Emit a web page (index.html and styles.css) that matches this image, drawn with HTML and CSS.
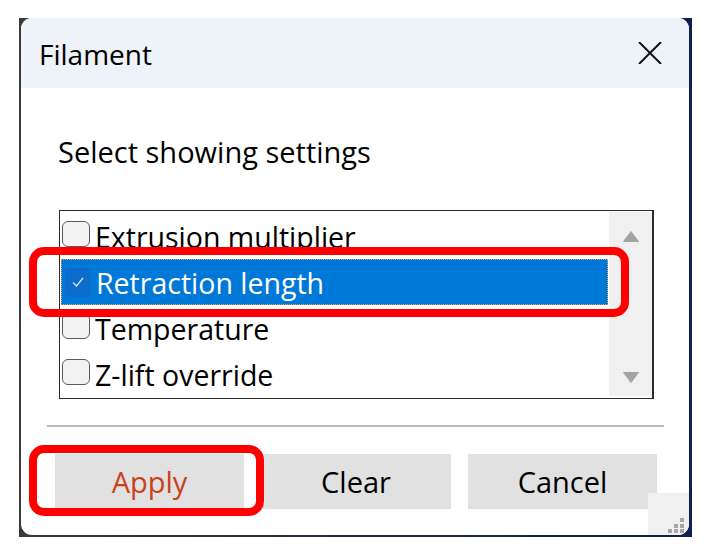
FILE: index.html
```html
<!DOCTYPE html>
<html>
<head>
<meta charset="utf-8">
<link rel="stylesheet" href="styles.css">
</head>
<body>
<div class="page">
  <div class="frame">
    <div class="dialog">
      <div class="titlebar">
        <span class="title">Filament</span>
        <svg class="close" width="24" height="22" viewBox="0 0 24 22"><path d="M1 0 L23 22 M23 0 L1 22" stroke="#111" stroke-width="2" fill="none"/></svg>
      </div>
      <div class="body">
        <div class="prompt">Select showing settings</div>
        <div class="listbox">
          <div class="items">
            <div class="row"><span class="cb"></span><span class="label">Extrusion multiplier</span></div>
            <div class="row selected"><span class="cb checked"><svg width="14" height="12" viewBox="0 0 14 12"><path d="M2 6.5 L5.5 10 L12 2" stroke="#dfe9f7" stroke-width="1.2" fill="none"/></svg></span><span class="label">Retraction length</span></div>
            <div class="row"><span class="cb"></span><span class="label">Temperature</span></div>
            <div class="row"><span class="cb"></span><span class="label">Z-lift override</span></div>
          </div>
          <div class="scrollbar">
            <svg width="16" height="11" viewBox="0 0 16 11"><path d="M8 0.5 L15.5 10.5 L0.5 10.5 Z" fill="#a3a3a3" stroke="#a3a3a3" stroke-linejoin="round"/></svg>
            <svg width="16" height="11" viewBox="0 0 16 11"><path d="M0.5 0.5 L15.5 0.5 L8 10.5 Z" fill="#a3a3a3" stroke="#a3a3a3" stroke-linejoin="round"/></svg>
          </div>
        </div>
        <div class="sep"></div>
        <div class="buttons">
          <div class="btn apply">Apply</div>
          <div class="btn">Clear</div>
          <div class="btn">Cancel</div>
        </div>
      </div>
      <div class="grip">
        <span class="dot d1"></span>
        <span class="dot d2"></span><span class="dot d3"></span>
        <span class="dot d4"></span><span class="dot d5"></span><span class="dot d6"></span>
      </div>
    </div>
  </div>
  <div class="mark mark-row"></div>
  <div class="mark mark-apply"></div>
</div>
</body>
</html>
```
FILE: styles.css
```css
html, body {
  margin: 0;
  padding: 0;
  background: #ffffff;
}
.page {
  position: relative;
  width: 712px;
  height: 558px;
  padding-top: 18px;
  box-sizing: border-box;
  font-family: "Open Sans", "Noto Sans", sans-serif;
  color: #000;
}
.frame {
  margin-left: 19px;
  width: 673px;
  height: 519px;
  box-sizing: border-box;
  padding: 0 3px 2px 2px;
  background: linear-gradient(to right, #3a3a3a 0%, #2a2d3a 40%, #0f1f52 100%);
}
.dialog {
  position: relative;
  width: 668px;
  height: 517px;
  background: #ffffff;
  border-radius: 11px;
  overflow: hidden;
  display: flex;
  flex-direction: column;
}
.titlebar {
  height: 70px;
  flex: none;
  box-sizing: border-box;
  background: #eef2f9;
  display: flex;
  justify-content: space-between;
  align-items: flex-start;
  padding: 16px 27px 0 18px;
}
.title {
  font-size: 28px;
  line-height: 40px;
}
.close {
  margin-top: 8px;
}
.body {
  display: flex;
  flex-direction: column;
}
.prompt {
  margin: 44px 0 0 37px;
  font-size: 29px;
  line-height: 40px;
}
.listbox {
  margin: 38px 0 0 38px;
  width: 595px;
  height: 189px;
  box-sizing: border-box;
  border: 1px solid #2b2b2b;
  border-right-width: 2px;
  display: flex;
}
.items {
  flex: 1;
  padding: 2px 1px 0 1px;
}
.row {
  height: 46px;
  display: flex;
  align-items: center;
  font-size: 28.5px;
  line-height: 43px;
  padding-top: 3px;
  box-sizing: border-box;
}
.row.selected {
  background: #0078d7;
  color: #ffffff;
  outline: 1px dotted #f0a040;
  outline-offset: -1px;
}
.cb {
  width: 28px;
  height: 26px;
  margin: -7px 5px 0 1px;
  box-sizing: border-box;
  border: 1.5px solid #5c5c5c;
  border-radius: 6px;
  background: #f3f3f3;
  flex: none;
  display: flex;
  align-items: center;
  justify-content: center;
}
.cb.checked {
  margin: -3px 5px 0 4px;
  width: 26px;
  height: 29px;
  border: none;
  background: #0b6ccb;
  border-radius: 4px;
}
.label {
  white-space: nowrap;
}
.scrollbar {
  width: 43px;
  margin: 1px 0 2px 0;
  background: #f0f0f0;
  display: flex;
  flex-direction: column;
  align-items: center;
  justify-content: space-between;
  padding: 19px 0 13px 0;
  box-sizing: border-box;
}
.sep {
  margin: 26px 0 0 26px;
  width: 617px;
  height: 2px;
  background: #b8b8b8;
}
.buttons {
  margin: 27px 0 0 34px;
  display: flex;
  gap: 17.5px;
}
.btn {
  width: 189px;
  height: 55px;
  background: #e1e1e1;
  font-size: 29px;
  line-height: 55px;
  text-align: center;
}
.btn.apply {
  color: #c9421c;
}
.grip {
  position: absolute;
  right: -1px;
  bottom: 0;
  width: 42px;
  height: 42px;
  background: #f0f0f0;
}
.dot {
  position: absolute;
  width: 4px;
  height: 4px;
  background: #a6a6a6;
}
.d1 { left: 32px; top: 25px; }
.d2 { left: 26px; top: 31px; }
.d3 { left: 32px; top: 31px; }
.d4 { left: 20px; top: 36px; }
.d5 { left: 26px; top: 36px; }
.d6 { left: 32px; top: 36px; }
.mark {
  position: absolute;
  box-sizing: border-box;
  border: 8px solid #ff0000;
  border-radius: 15px;
}
.mark-row {
  left: 29px;
  top: 247px;
  width: 600px;
  height: 70px;
}
.mark-apply {
  left: 29px;
  top: 445px;
  width: 235px;
  height: 71px;
}
```
